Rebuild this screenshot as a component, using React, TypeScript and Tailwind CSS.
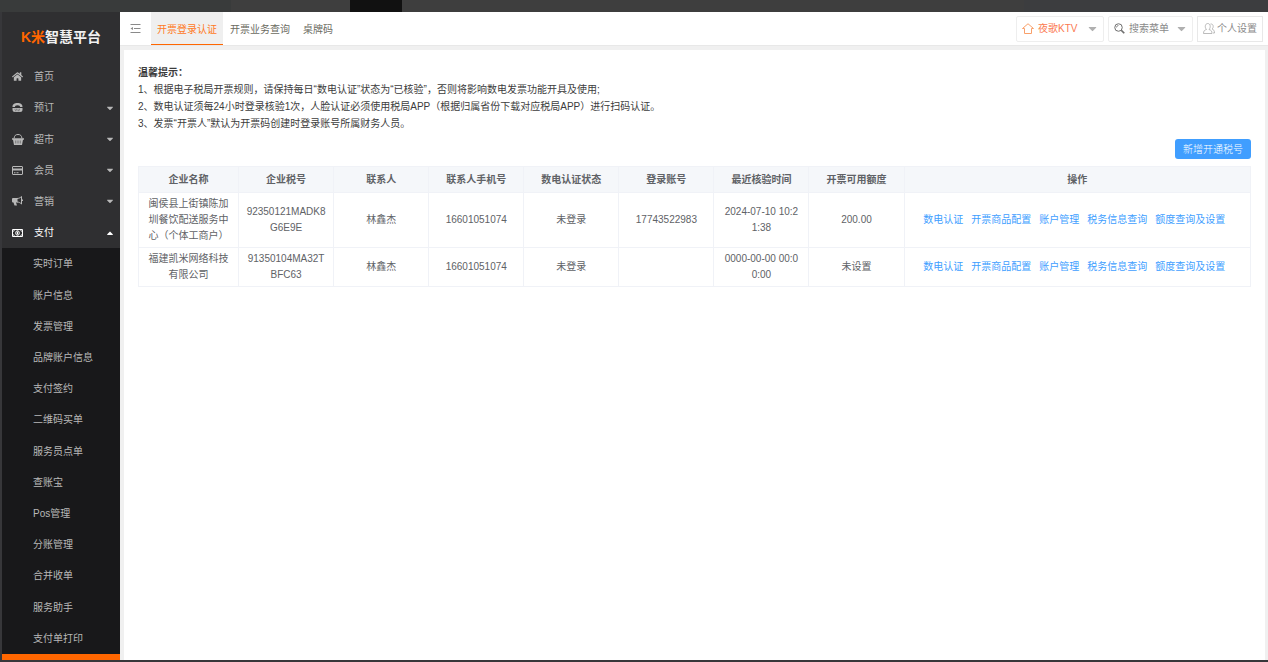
import { FaCaretDown, FaCaretUp, FaHome } from "react-icons/fa";

type MenuItem = { name: string; icon: React.ReactNode; open?: boolean; leaf?: boolean };

type Company = {
  name: string;
  taxNo: string;
  contact: string;
  phone: string;
  status: string;
  account: string;
  checkedAt: string;
  quota: string;
};

// ── Icons ────────────────────────────────────────────────────────────────

function PhoneIcon() {
  return (
    <svg viewBox="0 0 22 18" className="w-[11px] h-[9px]" fill="currentColor">
      <path d="M1 8C1 2 5 0 11 0s10 2 10 8h-5c0-2-1-3.500-5-3.500S6 6 6 8z" />
      <path d="M1 10h20v3q0 5-5 5H6q-5 0-5-5z" />
      <path d="M5 12.500h12M6 15.500h10" stroke="#2f2f31" strokeWidth="1" strokeDasharray="2 1" />
    </svg>
  );
}

function BasketIcon() {
  return (
    <svg viewBox="0 0 24 22" className="w-[12px] h-[11px]" fill="none" stroke="currentColor">
      <path d="M4 9C5 3 7 1 12 1s7 2 8 8" strokeWidth="2" />
      <path d="M0 8.500h24v3h-2L20 22H4L2 11.500H0z" fill="currentColor" stroke="none" />
      <path d="M7.500 13v6M12 13v6M16.500 13v6" stroke="#2f2f31" strokeWidth="1" />
    </svg>
  );
}

function HornIcon() {
  return (
    <svg viewBox="0 0 22 20" className="w-[11px] h-[10px]" fill="none" stroke="currentColor">
      <path d="M10 5c4 0 7-2 9-4v15c-2-2-5-4-9-4" strokeWidth="2" strokeLinejoin="round" />
      <path d="M2 4h9v9H8l2 6H5l-2-6H2q-2 0-2-2V6q0-2 2-2z" fill="currentColor" stroke="none" />
      <path d="M21 7v3" strokeWidth="2" />
    </svg>
  );
}

function CardIcon() {
  return (
    <svg viewBox="0 0 22 18" className="w-[11px] h-[9px]" fill="none" stroke="currentColor">
      <rect x="1" y="1" width="20" height="16" rx="1" strokeWidth="2" />
      <path d="M1 7h20" strokeWidth="4" />
      <path d="M4 13.5h3M9 13.5h4" strokeWidth="2" />
    </svg>
  );
}

function MoneyIcon() {
  return (
    <svg viewBox="0 0 22 16" className="w-[11px] h-[8px]" fill="none" stroke="currentColor">
      <path d="M1 1h20v14H1z" strokeWidth="2" />
      <path d="M1 5q4 0 4-4M21 5q-4 0-4-4M1 11q4 0 4 4M21 11q-4 0-4 4" strokeWidth="1.500" />
      <ellipse cx="11" cy="8" rx="3.500" ry="4.500" strokeWidth="2" />
      <path d="M11 5v6" strokeWidth="2" />
    </svg>
  );
}

function FoldIcon() {
  return (
    <svg viewBox="0 0 22 20" className="w-[11px] h-[10px]" fill="none" stroke="#8a8a8a" strokeWidth="2">
      <path d="M1 1h20M8 9h13M1 17h20" />
      <path d="M6 6v6L1 9z" fill="#8a8a8a" stroke="none" />
    </svg>
  );
}

function HouseIcon() {
  return (
    <svg viewBox="0 0 24 22" className="w-[12px] h-[11px]" fill="none" stroke="#f9a06a" strokeWidth="2">
      <path d="M1 11L12 1.5 23 11h-4v10H5V11z" strokeLinejoin="round" />
    </svg>
  );
}

function SearchIcon() {
  return (
    <svg viewBox="0 0 22 22" className="w-[11px] h-[11px]" fill="none" stroke="#6f6f6f" strokeWidth="2">
      <circle cx="9" cy="9" r="7.5" />
      <path d="M5 9a4 4 0 0 1 4-4" strokeWidth="1.5" />
      <path d="M14.5 14.5l6 6" strokeWidth="3.5" />
    </svg>
  );
}

function UserIcon() {
  return (
    <svg viewBox="0 0 24 22" className="w-[12px] h-[11px] shrink-0" fill="none" stroke="#a5a5a5" strokeWidth="1.5">
      <path d="M7 13c-4 1-6 3-6 8h17c0-5-2-7-6-8 4-4 3-12-2.500-12S3 9 7 13" strokeLinejoin="round" />
      <path d="M15 2c6-1 7 7 3 10 3 1 5 3 5 8h-3" />
    </svg>
  );
}

// ── Data ─────────────────────────────────────────────────────────────────

const menus: MenuItem[] = [
  { name: "首页", icon: <FaHome size={11} />, leaf: true },
  { name: "预订", icon: <PhoneIcon /> },
  { name: "超市", icon: <BasketIcon /> },
  { name: "会员", icon: <CardIcon /> },
  { name: "营销", icon: <HornIcon /> },
  { name: "支付", icon: <MoneyIcon />, open: true },
];

const payMenus = [
  "实时订单",
  "账户信息",
  "发票管理",
  "品牌账户信息",
  "支付签约",
  "二维码买单",
  "服务员点单",
  "查账宝",
  "Pos管理",
  "分账管理",
  "合并收单",
  "服务助手",
  "支付单打印",
];

const tabs = ["开票登录认证", "开票业务查询", "桌牌码"];

const tips = [
  "1、根据电子税局开票规则，请保持每日“数电认证”状态为“已核验”，否则将影响数电发票功能开具及使用;",
  "2、数电认证须每24小时登录核验1次，人脸认证必须使用税局APP（根据归属省份下载对应税局APP）进行扫码认证。",
  "3、发票“开票人”默认为开票码创建时登录账号所属财务人员。",
];

const columns = [
  "企业名称",
  "企业税号",
  "联系人",
  "联系人手机号",
  "数电认证状态",
  "登录账号",
  "最近核验时间",
  "开票可用额度",
  "操作",
];

const companies: Company[] = [
  {
    name: "闽侯县上街镇陈加\n圳餐饮配送服务中\n心（个体工商户）",
    taxNo: "92350121MADK8\nG6E9E",
    contact: "林鑫杰",
    phone: "16601051074",
    status: "未登录",
    account: "17743522983",
    checkedAt: "2024-07-10 10:2\n1:38",
    quota: "200.00",
  },
  {
    name: "福建凯米网络科技\n有限公司",
    taxNo: "91350104MA32T\nBFC63",
    contact: "林鑫杰",
    phone: "16601051074",
    status: "未登录",
    account: "",
    checkedAt: "0000-00-00 00:0\n0:00",
    quota: "未设置",
  },
];

const actions = ["数电认证", "开票商品配置", "账户管理", "税务信息查询", "额度查询及设置"];

// ── Layout parts ─────────────────────────────────────────────────────────

function Sidebar() {
  return (
    <aside className="w-[118px] shrink-0 flex flex-col bg-[#2f2f31] text-[#b8b8b8]">
      <div className="h-[49px] shrink-0 flex items-center justify-center font-bold leading-none">
        <span className="text-sm text-[#ff6600]">K米</span>
        <span className="text-sm text-[#f2f2f2]">智慧平台</span>
      </div>
      <nav className="flex-1 flex flex-col">
        {menus.map((menu) => (
          <button
            key={menu.name}
            className={`flex-1 flex items-center pl-2.5 pr-[5px] text-left ${menu.open ? "text-white" : ""}`}
          >
            <span className="w-[22px] flex items-center">{menu.icon}</span>
            <span className="flex-1">{menu.name}</span>
            {!menu.leaf && (menu.open ? <FaCaretUp size={10} /> : <FaCaretDown size={10} />)}
          </button>
        ))}
        {payMenus.map((name) => (
          <a key={name} href="#" className="flex-1 flex items-center pl-[31px] bg-[#18181a]">
            {name}
          </a>
        ))}
      </nav>
      <div className="h-1.5 shrink-0 bg-[#ff6600]" />
    </aside>
  );
}

function Header() {
  return (
    <header className="h-[34px] shrink-0 flex items-stretch bg-white border-b border-[#e8e8e8] pr-[5px]">
      <button aria-label="收起菜单" className="w-[31px] flex items-center justify-center">
        <FoldIcon />
      </button>
      <nav className="flex gap-px text-[#6b6b5f]">
        {tabs.map((tab, i) => (
          <a
            key={tab}
            href="#"
            className={`flex items-center pt-0.5 px-1.5 border-b ${
              i === 0 ? "bg-[#efefef] text-[#ff7a1f] border-[#ff6600]" : "border-transparent"
            }`}
          >
            {tab}
          </a>
        ))}
      </nav>
      <div className="ml-auto flex items-center gap-1 text-[#8a8a8a]">
        <button className="h-[26px] w-[88px] flex items-center gap-1 pl-[5px] pr-1 border border-[#eeeeee] rounded-xs text-[#fb7a50]">
          <HouseIcon />
          夜歌KTV
          <FaCaretDown size={13} className="ml-auto text-[#b0b0b0]" />
        </button>
        <button className="h-[26px] w-[85px] flex items-center gap-1 pl-[5px] pr-1 border border-[#eeeeee] rounded-xs">
          <SearchIcon />
          搜索菜单
          <FaCaretDown size={13} className="ml-auto text-[#b0b0b0]" />
        </button>
        <button className="h-[26px] w-[66px] flex items-center gap-0.5 px-[5px] border border-[#e8e8e8] whitespace-nowrap">
          <UserIcon />
          个人设置
        </button>
      </div>
    </header>
  );
}

function CompanyTable() {
  return (
    <table className="w-full mt-[7px] table-fixed border-collapse text-center text-[#606266]">
      <colgroup>
        <col className="w-[9%]" />
        {columns.slice(1, 8).map((c) => (
          <col key={c} className="w-[8.55%]" />
        ))}
        <col />
      </colgroup>
      <thead className="bg-[#f5f7fa]">
        <tr>
          {columns.map((c) => (
            <th key={c} className="h-[26px] border border-[#f0f2f7] font-bold">
              {c}
            </th>
          ))}
        </tr>
      </thead>
      <tbody>
        {companies.map((row) => (
          <tr key={row.taxNo}>
            {Object.values(row).map((value, i) => (
              <td key={i} className="py-[3px] border border-[#f0f2f7] leading-4 whitespace-pre">
                {value}
              </td>
            ))}
            <td className="py-[3px] border border-[#f0f2f7] leading-4">
              <div className="flex justify-center gap-2 pr-1.5">
                {actions.map((a) => (
                  <a key={a} href="#" className="text-[#409eff]">
                    {a}
                  </a>
                ))}
              </div>
            </td>
          </tr>
        ))}
      </tbody>
    </table>
  );
}

export default function App() {
  return (
    <div className="h-screen flex flex-col bg-[#37373a] pb-0.5 text-[10px] font-['Liberation_Sans','Noto_Sans_CJK_SC',sans-serif]">
      {/* Dimmed strip above the console */}
      <div className="h-3 shrink-0 flex bg-[#393b3b]">
        <div className="w-[231px]" />
        <div className="w-[119px] bg-[#3e3e3e]" />
        <div className="w-[52px] bg-[#111111]" />
        <div className="flex-1 bg-[#3e3e3e]" />
        <div className="w-[244px] bg-[#3c3d3f]" />
      </div>

      <div className="flex-1 min-h-0 flex pl-0.5">
        <Sidebar />
        <div className="flex-1 min-w-0 flex flex-col bg-[#f0f0f0]">
          <Header />
          <main className="flex-1 mt-1 ml-1 mr-[3px] pt-3.5 px-3.5 bg-white">
            <div className="leading-[17px] text-[#3c3c3c]">
              <h1 className="font-bold">温馨提示：</h1>
              {tips.map((tip) => (
                <p key={tip}>{tip}</p>
              ))}
            </div>
            <div className="flex justify-end mt-[7px]">
              <button className="h-5 px-2 rounded-[3px] bg-[#409eff] text-white font-light">新增开通税号</button>
            </div>
            <CompanyTable />
          </main>
        </div>
      </div>
    </div>
  );
}
